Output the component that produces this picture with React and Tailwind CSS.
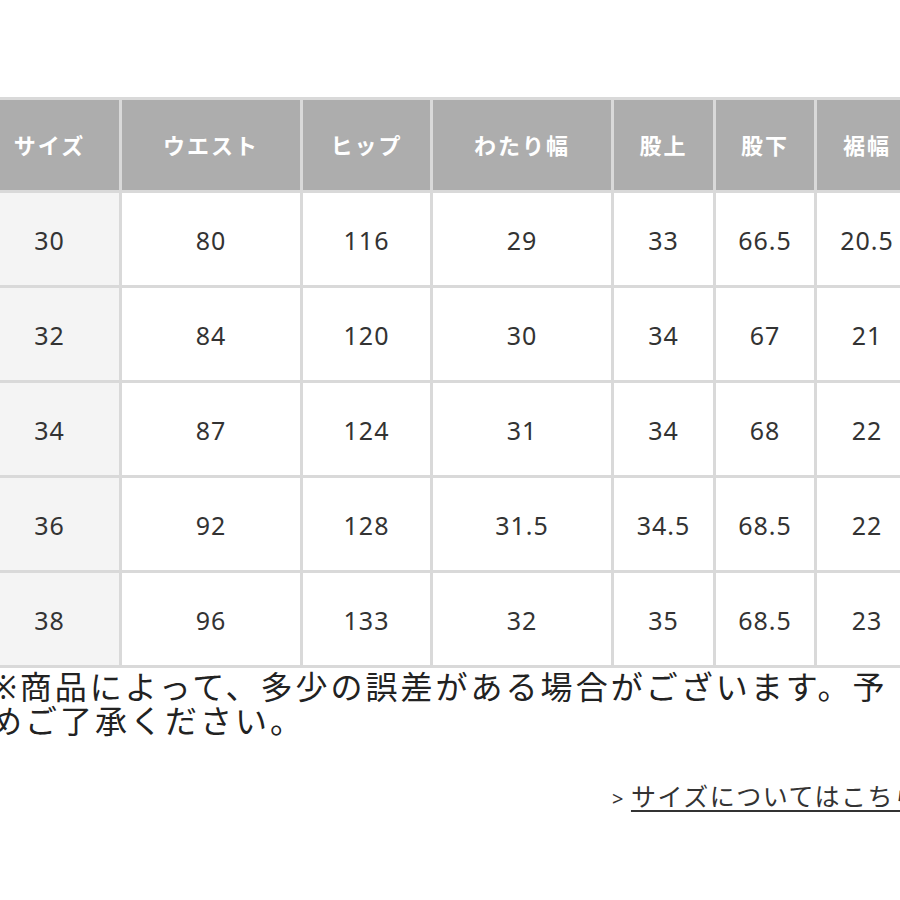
import React from "react";

const headers = ["サイズ", "ウエスト", "ヒップ", "わたり幅", "股上", "股下", "裾幅"];

const rows = [
    ["30", "80", "116", "29", "33", "66.5", "20.5"],
    ["32", "84", "120", "30", "34", "67", "21"],
    ["34", "87", "124", "31", "34", "68", "22"],
    ["36", "92", "128", "31.5", "34.5", "68.5", "22"],
    ["38", "96", "133", "32", "35", "68.5", "23"],
];

const font = { fontFamily: '"Noto Sans", "Noto Sans CJK JP", sans-serif' };

const App = () => {
    return (
        <div className="w-[900px] h-[900px] overflow-hidden bg-white text-[#333]" style={font}>
            <div className="pt-[97px]">
                <div className="ml-[-20px] w-[937px] grid grid-cols-[139px_178px_127px_178px_99px_98px_100px] gap-[3px] bg-[#d9d9d9] py-[3px]">
                    {headers.map((h) => (
                        <div
                            key={h}
                            className="h-[90px] bg-[#adadad] flex items-center justify-center text-white text-[22px] font-bold tracking-[2px]"
                        >
                            {h}
                        </div>
                    ))}
                    {rows.map((row, i) =>
                        row.map((v, j) => (
                            <div
                                key={i + "-" + j}
                                className={
                                    "h-[92px] pt-[3px] flex items-center justify-center text-[25px] tracking-[1px] " +
                                    (j === 0 ? "bg-[#f4f4f4]" : "bg-white")
                                }
                            >
                                {v}
                            </div>
                        ))
                    )}
                </div>
            </div>
            <div className="ml-[-10px] mt-[2px] text-[32px] leading-[34px] tracking-[3px] whitespace-nowrap text-[#222]">
                <p>※商品によって、多少の誤差がある場合がございます。予</p>
                <p>めご了承ください。</p>
            </div>
            <div className="mt-[40px] pl-[612px] whitespace-nowrap text-[25px] tracking-[1.5px] text-[#333]">
                <span className="text-[20px] mr-[6px]">&gt;</span>
                <span className="underline underline-offset-4">サイズについてはこちら</span>
            </div>
        </div>
    );
};

export default App;
